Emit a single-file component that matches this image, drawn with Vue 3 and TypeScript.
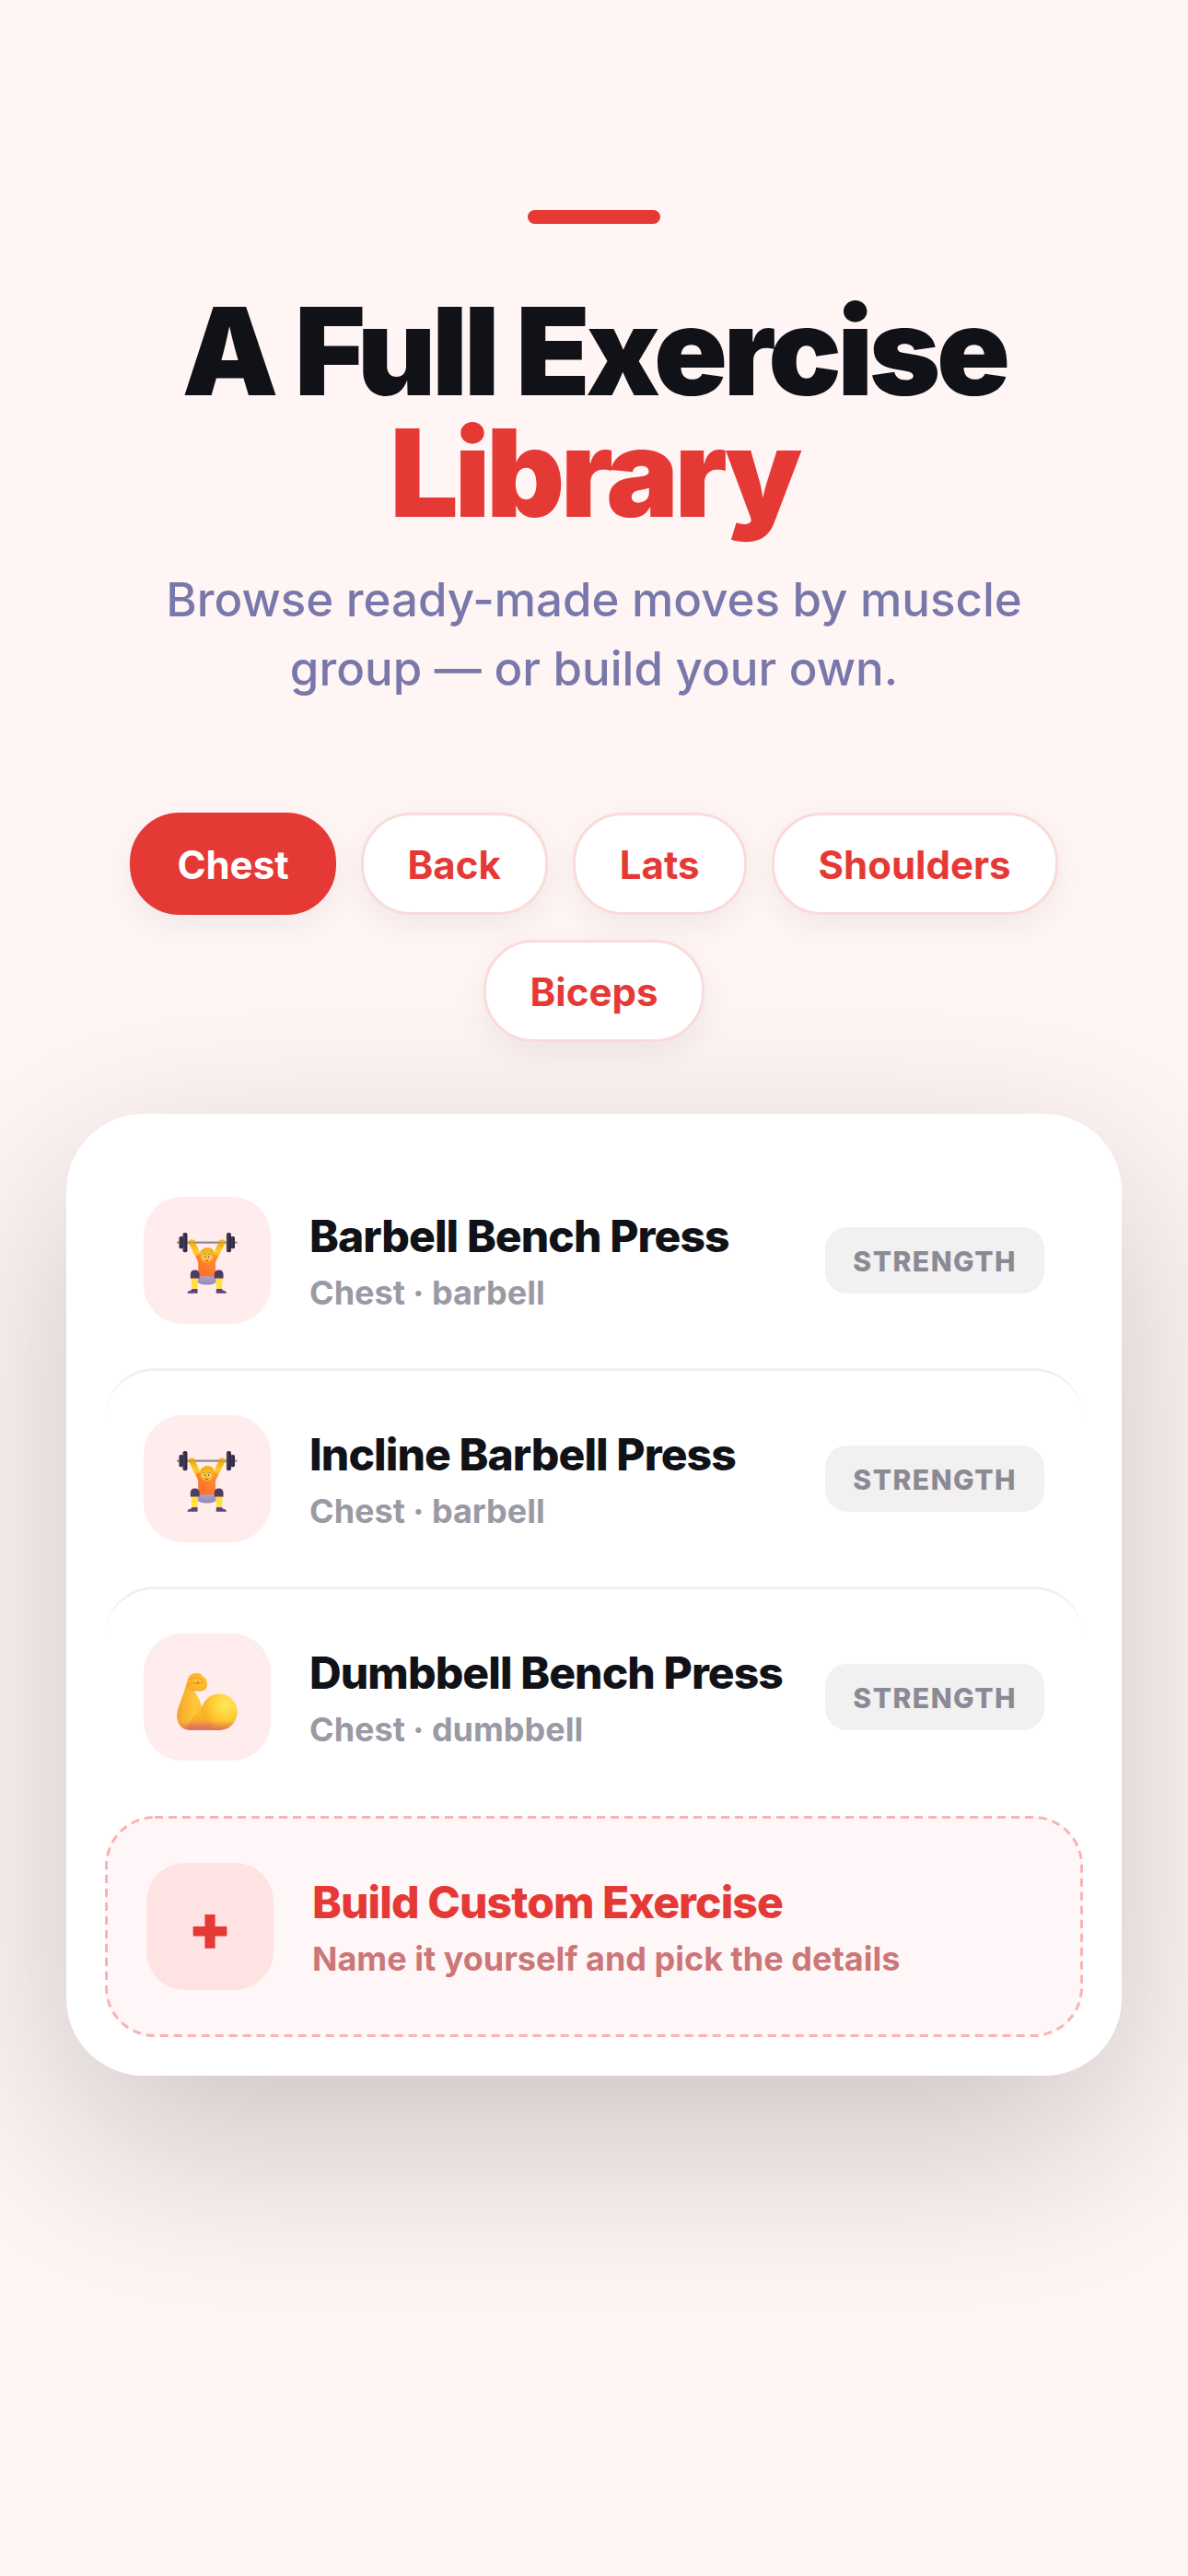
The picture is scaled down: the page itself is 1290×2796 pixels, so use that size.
<script setup lang="ts">
import { ref } from 'vue'

interface Exercise {
  name: string
  detail: string
  kind: string
  icon: 'lifter' | 'biceps'
}

const groups: string[] = ['Chest', 'Back', 'Lats', 'Shoulders', 'Biceps']
const selected = ref<string>('Chest')

const exercises: Exercise[] = [
  { name: 'Barbell Bench Press', detail: 'Chest · barbell', kind: 'STRENGTH', icon: 'lifter' },
  { name: 'Incline Barbell Press', detail: 'Chest · barbell', kind: 'STRENGTH', icon: 'lifter' },
  { name: 'Dumbbell Bench Press', detail: 'Chest · dumbbell', kind: 'STRENGTH', icon: 'biceps' },
]
</script>

<template>
  <main class="page">
    <header class="intro">
      <span class="accent"></span>
      <h1 class="title">A Full Exercise<br /><em>Library</em></h1>
      <p class="subtitle">Browse ready-made moves by muscle group — or build your own.</p>
    </header>

    <nav class="chips" aria-label="Muscle groups">
      <button
        v-for="group in groups"
        :key="group"
        type="button"
        class="chip"
        :class="{ active: group === selected }"
        :aria-pressed="group === selected"
        @click="selected = group"
      >{{ group }}</button>
    </nav>

    <section class="card">
      <ul class="list">
        <li v-for="item in exercises" :key="item.name" class="row">
          <span class="tile">
            <svg v-if="item.icon === 'lifter'" class="emoji" viewBox="128 147 196 196" aria-hidden="true">
              <defs>
                <linearGradient id="shirt" x1="0" x2="1" y1="1" y2="0">
                  <stop offset="0" stop-color="#ff6a1f" />
                  <stop offset="1" stop-color="#ff9140" />
                </linearGradient>
                <linearGradient id="arm" x1="0" x2="0" y1="0" y2="1">
                  <stop offset="0" stop-color="#f0a818" />
                  <stop offset="0.5" stop-color="#ffcb2a" />
                  <stop offset="1" stop-color="#f2a51c" />
                </linearGradient>
                <linearGradient id="plate" x1="0" x2="1" y1="0" y2="0">
                  <stop offset="0" stop-color="#4d4163" />
                  <stop offset="1" stop-color="#2b2238" />
                </linearGradient>
                <linearGradient id="shorts" x1="0" x2="0" y1="0" y2="1">
                  <stop offset="0" stop-color="#b3a7cb" />
                  <stop offset="1" stop-color="#9587b2" />
                </linearGradient>
              </defs>
              <path d="M166 180h22l20 44-15 10z" fill="url(#arm)" />
              <path d="M284 180h-22l-20 44 15 10z" fill="url(#arm)" />
              <path d="M193 283h64v20q-5 12-32 12t-32-12z" fill="url(#shorts)" />
              <path d="M190 222l8-4q27-9 54 0l8 4-7 22v43h-56v-43z" fill="url(#shirt)" />
              <path d="M174 291h23l-3 39h-17z" fill="#ffe03c" />
              <path d="M276 291h-23l3 39h17z" fill="#ffe03c" />
              <path d="M172 281q0-14 14-14h3q12 2 12 14v13h-29z" fill="#503a68" />
              <path d="M278 281q0-14-14-14h-3q-12 2-12 14v13h29z" fill="#503a68" />
              <path d="M177 328h18v14h-33q0-8 11-9z" fill="#5d4382" />
              <path d="M273 328h-18v14h33q0-8-11-9z" fill="#5d4382" />
              <rect x="128" y="175" width="195" height="7" rx="3" fill="#8f8a90" />
              <rect x="135" y="159" width="14" height="39" rx="5" fill="url(#plate)" />
              <rect x="147" y="147" width="15" height="63" rx="6" fill="url(#plate)" />
              <rect x="301" y="159" width="14" height="39" rx="5" fill="url(#plate)" />
              <rect x="288" y="147" width="15" height="63" rx="6" fill="url(#plate)" />
              <path d="M165 178q0-8 8-9h8q7 2 7 8v5q-11 5-22 2z" fill="#f6b41e" />
              <path d="M285 178q0-8-8-9h-8q-7 2-7 8v5q11 5 22 2z" fill="#f6b41e" />
              <path d="M166 179h22M262 179h22" stroke="#a58a52" stroke-width="3" />
              <circle cx="225" cy="223" r="21" fill="#f9bb22" />
              <path d="M203 219q-2-17 12-21 6-5 12-3 18-1 21 16l-1 10q-4-11-16-14-16 1-23 5z" fill="#eeb21f" />
              <circle cx="217" cy="225" r="5" fill="#fff" />
              <circle cx="232" cy="225" r="5" fill="#fff" />
              <circle cx="218" cy="225" r="3" fill="#6b3d55" />
              <circle cx="231" cy="225" r="3" fill="#6b3d55" />
              <path d="M212 217l8-1M229 216l8 1" stroke="#c9731f" stroke-width="2" />
              <path d="M219 236h11q-5 7-11 0z" fill="#c2402f" />
            </svg>
            <svg v-else class="emoji" viewBox="128 128 196 196" aria-hidden="true">
              <defs>
                <linearGradient id="forearm" x1="0" x2="1" y1="0" y2="0">
                  <stop offset="0" stop-color="#f4a42c" />
                  <stop offset="0.45" stop-color="#ffc83a" />
                  <stop offset="1" stop-color="#fbb02a" />
                </linearGradient>
                <linearGradient id="under" x1="0" x2="0" y1="0" y2="1">
                  <stop offset="0.3" stop-color="#ffbd22" />
                  <stop offset="0.72" stop-color="#f69a3c" />
                  <stop offset="1" stop-color="#d9706c" />
                </linearGradient>
                <linearGradient id="shade" x1="0" x2="0" y1="0" y2="1">
                  <stop offset="0.55" stop-color="#e07a58" stop-opacity="0" />
                  <stop offset="1" stop-color="#db7164" />
                </linearGradient>
                <radialGradient id="muscle" cx="0.68" cy="0.3" r="0.75">
                  <stop offset="0" stop-color="#ffea5c" />
                  <stop offset="0.5" stop-color="#ffce37" />
                  <stop offset="1" stop-color="#fba51e" />
                </radialGradient>
                <radialGradient id="fist" cx="0.6" cy="0.45" r="0.65">
                  <stop offset="0" stop-color="#ffce35" />
                  <stop offset="1" stop-color="#f6a925" />
                </radialGradient>
              </defs>
              <path d="M160 172q-12 42-29 84-8 34 7 52 12 16 33 16h94l-58-80q-10-30-24-46z" fill="url(#forearm)" />
              <path d="M208 248l-45 57q-2 12 8 19h96q-2-23-20-32z" fill="url(#under)" />
              <circle cx="265" cy="265" r="58" fill="url(#muscle)" />
              <path d="M208 248q-7 34 42 60l-42 16z" fill="url(#under)" />
              <path d="M130 258q-6 32 8 50 12 16 33 16h94q55-4 58-59z" fill="url(#shade)" />
              <path d="M160 174q4-34 30-34 15-2 22 10 14 8 14 24 0 22-20 24h-28q-18-4-18-24z" fill="url(#fist)" />
              <path d="M174 160q16-11 32 0 7 6 1 11-10 5-20 3M171 175q12-8 22-3 12 1 20-2" fill="none" stroke="#eb9226" stroke-width="3" stroke-linecap="round" />
              <circle cx="197" cy="168" r="3" fill="#c9731d" />
            </svg>
          </span>
          <div class="text">
            <h2 class="name">{{ item.name }}</h2>
            <p class="detail">{{ item.detail }}</p>
          </div>
          <span class="tag">{{ item.kind }}</span>
        </li>
      </ul>

      <button type="button" class="row custom">
        <svg class="outline" aria-hidden="true">
          <rect x="1.5" y="1.5" rx="52.5" />
        </svg>
        <span class="tile plus">+</span>
        <span class="text">
          <span class="name">Build Custom Exercise</span>
          <span class="detail">Name it yourself and pick the details</span>
        </span>
      </button>
    </section>
  </main>
</template>

<style>
body {
  margin: 0;
  background: #fff5f4;
}
</style>

<style scoped>
.page {
  box-sizing: border-box;
  min-height: 100vh;
  padding: 228px 72px 96px;
  background: #fff5f4;
  color: #101217;
  font-family: Inter, 'Liberation Sans', sans-serif;
}

.intro {
  display: flex;
  flex-direction: column;
  align-items: center;
  text-align: center;
}

.accent {
  width: 144px;
  height: 15px;
  border-radius: 8px;
  background: #e53935;
}

.title {
  margin: 72px 0 0;
  font-size: 132px;
  line-height: 132px;
  font-weight: 900;
  letter-spacing: -0.034em;
}

.title em {
  color: #e53935;
  font-style: normal;
}

.subtitle {
  max-width: 980px;
  margin: 34px 0 0;
  color: #7878aa;
  font-size: 51px;
  line-height: 75px;
  font-weight: 500;
}

.chips {
  display: flex;
  flex-wrap: wrap;
  justify-content: center;
  gap: 27px;
  margin-top: 119px;
}

.chip {
  padding: 28px 48px 26px;
  border: 3px solid #fadbdb;
  border-radius: 54px;
  background: #fff;
  box-shadow: 0 12px 36px rgba(17, 18, 23, 0.06);
  color: #e53935;
  font: inherit;
  font-size: 42px;
  line-height: 51px;
  font-weight: 700;
}

.chip.active {
  border-color: #e53935;
  background: #e53935;
  color: #fff;
}

.card {
  margin-top: 78px;
  padding: 42px;
  border-radius: 84px;
  background: #fff;
  box-shadow: 0 72px 210px rgba(17, 18, 23, 0.22);
}

.list {
  margin: 0;
  padding: 0;
  list-style: none;
}

.row {
  display: flex;
  align-items: center;
  gap: 42px;
  padding: 48px 42px;
  border-radius: 54px;
}

.row + .row {
  border-top: 3px solid #efefef;
}

.tile {
  display: flex;
  flex: none;
  align-items: center;
  justify-content: center;
  box-sizing: border-box;
  width: 138px;
  height: 138px;
  padding-top: 6px;
  border-radius: 42px;
  background: #ffecec;
}

.emoji {
  width: 66px;
  height: 66px;
}

.text {
  display: flex;
  flex: 1;
  flex-direction: column;
  gap: 10px;
  min-width: 0;
  padding-top: 2px;
}

.name {
  margin: 0;
  font-size: 48px;
  line-height: 58px;
  font-weight: 800;
  letter-spacing: -0.019em;
}

.detail {
  margin: 0;
  color: #9a9aa5;
  font-size: 36px;
  line-height: 44px;
  font-weight: 700;
}

.tag {
  padding: 19px 30px 17px;
  border-radius: 24px;
  background: #f2f0f1;
  color: #8a8a95;
  font-size: 30px;
  line-height: 36px;
  font-weight: 800;
  letter-spacing: 0.05em;
}

.custom {
  position: relative;
  box-sizing: border-box;
  width: 100%;
  margin-top: 12px;
  border: 3px solid transparent;
  background: #fff6f7;
  color: #e53935;
  font: inherit;
  text-align: left;
}

.row + .row.custom,
.custom {
  border-top: 3px solid transparent;
}

.outline {
  position: absolute;
  inset: -3px;
  width: calc(100% + 6px);
  height: calc(100% + 6px);
  pointer-events: none;
}

.outline rect {
  width: calc(100% - 3px);
  height: calc(100% - 3px);
  fill: none;
  stroke: #f8b4b4;
  stroke-width: 3px;
  stroke-dasharray: 9 6;
}

.custom .detail {
  color: #cc7777;
}

.plus {
  padding-top: 0;
  background: #ffe2e2;
  font-size: 70px;
  font-weight: 900;
}
</style>
